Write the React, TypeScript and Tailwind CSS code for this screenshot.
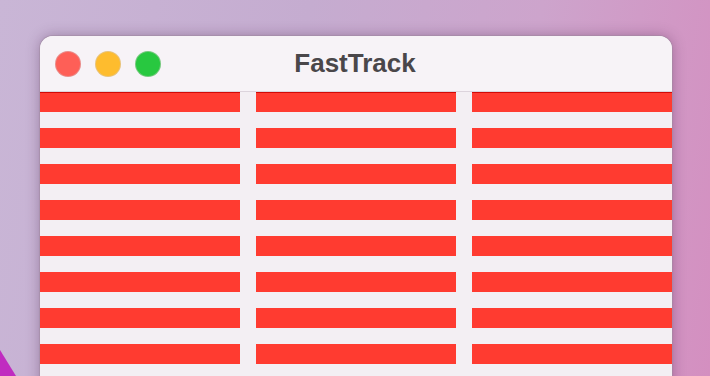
import React from 'react';

const ROWS = 8;
const COLS = 3;

const App: React.FC = () => {
  return (
    <div
      className="relative w-[710px] h-[376px] overflow-hidden"
      style={{
        background:
          'linear-gradient(100deg, #c9b6d6 0%, #c5acd0 40%, #cda4cc 70%, #d48fc0 100%)',
      }}
    >
      {/* desktop wallpaper accent */}
      <svg className="absolute left-0 bottom-0" width="40" height="40" viewBox="0 0 40 40">
        <polygon points="0,14 16,40 0,40" fill="#c02cc0" />
      </svg>

      <div className="pt-[36px] pl-[40px]">
        <div className="w-[632px] h-[360px] rounded-t-[13px] overflow-hidden bg-[#f3eff3] shadow-[0_0_14px_rgba(60,20,60,0.35)] ring-1 ring-[#a08aa0]/50">
          {/* Title bar */}
          <div className="relative h-[56px] bg-[#f7f3f7] flex items-center border-b border-[#dcd4dc]">
            <div className="flex items-center gap-[16px] pl-[16px]">
              <span className="w-[24px] h-[24px] rounded-full bg-[#fe5f57] ring-1 ring-[#e0443e]/60" />
              <span className="w-[24px] h-[24px] rounded-full bg-[#febc2e] ring-1 ring-[#dea123]/60" />
              <span className="w-[24px] h-[24px] rounded-full bg-[#28c840] ring-1 ring-[#1aab29]/60" />
            </div>
            <div
              className="absolute inset-0 flex items-center justify-center pr-[2px] text-[26px] font-bold text-[#4a474a] pointer-events-none"
              style={{ fontFamily: '"Liberation Sans", Arial, sans-serif' }}
            >
              FastTrack
            </div>
          </div>

          {/* Content */}
          <div className="flex flex-col gap-[16px]">
            {Array.from({ length: ROWS }).map((_, r) => (
              <div key={r} className="flex gap-[16px]">
                {Array.from({ length: COLS }).map((_, c) => (
                  <div
                    key={c}
                    className={`w-[200px] h-[20px] bg-[#ff3b30] ${r === 0 ? 'border-t border-[#d20a06]' : ''}`}
                  />
                ))}
              </div>
            ))}
          </div>
        </div>
      </div>
    </div>
  );
};

export default App;
